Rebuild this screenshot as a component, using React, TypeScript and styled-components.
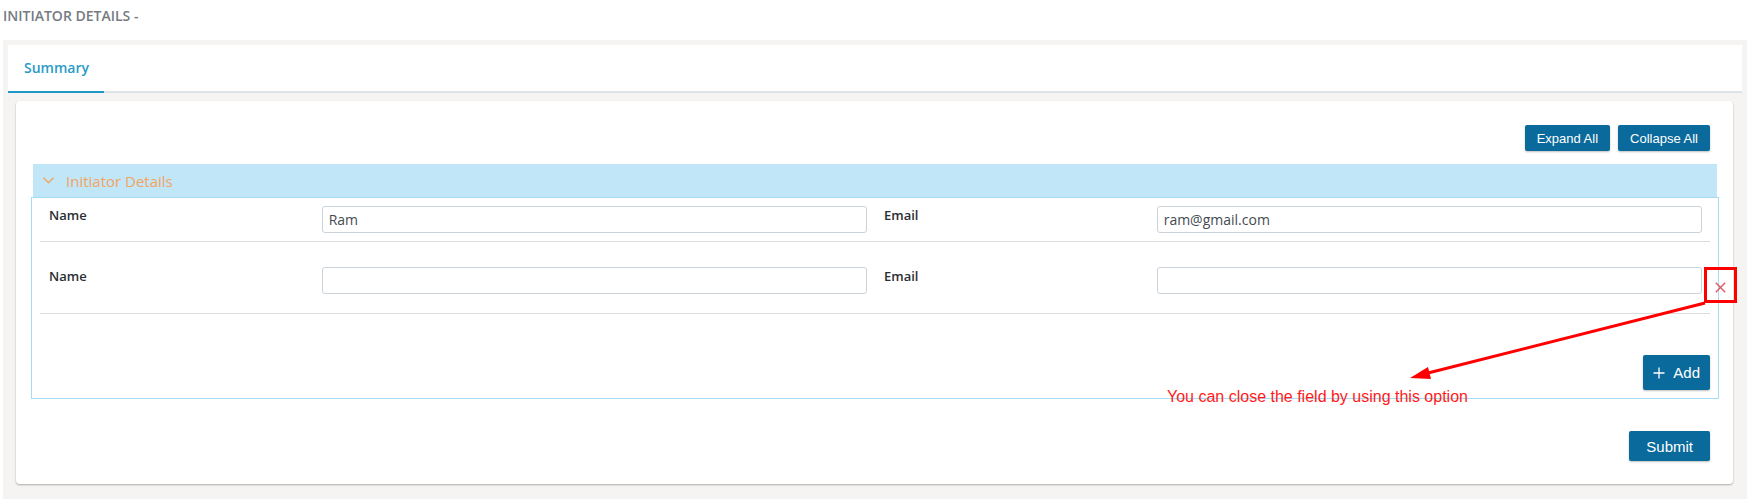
import React from "react";
import styled, { createGlobalStyle } from "styled-components";

const GlobalStyle = createGlobalStyle`
  html, body {
    margin: 0;
    padding: 0;
    background: #ffffff;
    overflow: hidden;
  }
  body {
    font-family: "Open Sans", "Noto Sans", sans-serif;
  }
  * {
    box-sizing: border-box;
  }
`;

const SPage = styled.div`
  position: relative;
  width: 1755px;
  height: 499px;
`;

const STitle = styled.div`
  padding: 6px 0 0 3px;
  margin-bottom: 14px;
  line-height: 20px;
  font-size: 14px;
  font-weight: 600;
  color: #767b82;
`;

const SPanel = styled.div`
  margin: 0 8px 0 3px;
  padding: 5px 5px 15px;
  background: #f5f4f2;
`;

const STabBar = styled.div`
  display: flex;
  background: #ffffff;
  border-bottom: 2px solid #dfe2e6;
`;

const STab = styled.div<{ $active?: boolean }>`
  padding: 13px 15px 14px 16px;
  margin-bottom: -2px;
  line-height: 19px;
  font-size: 14px;
  font-weight: 600;
  color: ${(p) => (p.$active ? "#2a9bc8" : "#555")};
  border-bottom: 2px solid ${(p) => (p.$active ? "#1f98c5" : "transparent")};
`;

const SCard = styled.div`
  margin: 8px 9px 0 8px;
  padding: 24px 15px 23px 16px;
  background: #ffffff;
  border-radius: 4px;
  box-shadow: 0 1px 2px rgba(0, 0, 0, 0.3);
`;

const SToolbar = styled.div<{ $gap?: number }>`
  display: flex;
  justify-content: flex-end;
  gap: ${(p) => p.$gap ?? 8}px;
  padding-right: 8px;
`;

const SButton = styled.button<{ $h: number; $size: number; $px: number }>`
  display: inline-flex;
  align-items: center;
  gap: 8px;
  height: ${(p) => p.$h}px;
  padding: 0 ${(p) => p.$px}px;
  border: none;
  border-radius: 2px;
  background: #0a6a9b;
  color: #ffffff;
  font-family: "Liberation Sans", Arial, sans-serif;
  font-size: ${(p) => p.$size}px;
  box-shadow: 0 1px 2px rgba(0, 0, 0, 0.25);
  cursor: pointer;
`;

const SAccordion = styled.div`
  margin-top: 13px;
`;

const SAccHeader = styled.div`
  display: flex;
  align-items: center;
  gap: 12px;
  height: 33px;
  margin: 0 1px;
  padding-left: 10px;
  background: #c1e6f7;
  color: #f4a460;
  font-size: 15px;
`;

const SAccBody = styled.div`
  border: 1px solid #a6dcf3;
  margin: 0 -1px;
  padding: 0 8px 8px;
`;

const SRow = styled.div<{ $pt: number; $pb: number }>`
  position: relative;
  display: grid;
  grid-template-columns: 1fr 1fr;
  column-gap: 17px;
  padding: ${(p) => p.$pt}px 8px ${(p) => p.$pb}px 9px;
  border-bottom: 1px solid #dcdcdc;
`;

const SField = styled.div`
  display: grid;
  grid-template-columns: 1fr 2fr;
  align-items: start;
`;

const SLabel = styled.label`
  line-height: 18px;
  font-size: 13px;
  font-weight: 600;
  color: #2a2e33;
`;

const SInput = styled.input`
  height: 27px;
  width: 100%;
  padding: 0 6px;
  border: 1px solid #ccd2d9;
  border-radius: 3px;
  font-family: "Open Sans", "Noto Sans", sans-serif;
  font-size: 14px;
  color: #454b52;
  outline: none;
`;

const SClose = styled.button`
  position: absolute;
  right: -16px;
  top: 40px;
  width: 11px;
  height: 11px;
  padding: 0;
  border: none;
  background: transparent;
  display: flex;
  cursor: pointer;
`;

const SAddRow = styled.div`
  display: flex;
  justify-content: flex-end;
  margin-top: 41px;
`;

const SSubmitRow = styled(SToolbar)`
  margin-top: 32px;
`;

/* annotation drawn over the screenshot */
const SMarkBox = styled.div`
  position: absolute;
  left: 1704px;
  top: 267px;
  width: 33px;
  height: 36px;
  border: 3px solid #ff0000;
  pointer-events: none;
`;

const SArrow = styled.svg`
  position: absolute;
  left: 1400px;
  top: 295px;
  pointer-events: none;
`;

const SNote = styled.span`
  position: absolute;
  left: 1167px;
  top: 388px;
  font-family: "Liberation Sans", Arial, sans-serif;
  font-size: 16px;
  color: #ff1a1a;
  white-space: nowrap;
  pointer-events: none;
`;

const Chevron = () => (
  <svg width="11" height="7" viewBox="0 0 11 7">
    <polyline points="0.5,0.8 5.5,5.8 10.5,0.8" fill="none" stroke="#f4a460" strokeWidth="1.4" />
  </svg>
);

const Plus = () => (
  <svg width="12" height="12" viewBox="0 0 12 12">
    <path d="M6 0.5v11M0.5 6h11" stroke="#ffffff" strokeWidth="1.3" />
  </svg>
);

const Cross = () => (
  <svg width="11" height="11" viewBox="0 0 11 11">
    <path d="M0.8 0.8l9.4 9.4M10.2 0.8l-9.4 9.4" stroke="#de5762" strokeWidth="1.4" />
  </svg>
);

interface InitiatorRowProps {
  name: string;
  email: string;
  pt: number;
  pb: number;
  removable?: boolean;
}

const InitiatorRow = ({ name, email, pt, pb, removable }: InitiatorRowProps) => (
  <SRow $pt={pt} $pb={pb}>
    <SField>
      <SLabel>Name</SLabel>
      <SInput defaultValue={name} />
    </SField>
    <SField>
      <SLabel>Email</SLabel>
      <SInput defaultValue={email} />
    </SField>
    {removable && (
      <SClose aria-label="Remove">
        <Cross />
      </SClose>
    )}
  </SRow>
);

export default function App() {
  return (
    <SPage>
      <GlobalStyle />
      <STitle>INITIATOR DETAILS -</STitle>
      <SPanel>
        <STabBar>
          <STab $active>Summary</STab>
        </STabBar>
        <SCard>
          <SToolbar>
            <SButton $h={26} $size={13} $px={12}>Expand All</SButton>
            <SButton $h={26} $size={13} $px={12}>Collapse All</SButton>
          </SToolbar>
          <SAccordion>
            <SAccHeader>
              <Chevron />
              Initiator Details
            </SAccHeader>
            <SAccBody>
              <InitiatorRow name="Ram" email="ram@gmail.com" pt={8} pb={8} />
              <InitiatorRow name="" email="" pt={25} pb={19} removable />
              <SAddRow>
                <SButton $h={35} $size={15} $px={10}>
                  <Plus />
                  Add
                </SButton>
              </SAddRow>
            </SAccBody>
          </SAccordion>
          <SSubmitRow>
            <SButton $h={30} $size={15} $px={17}>Submit</SButton>
          </SSubmitRow>
        </SCard>
      </SPanel>

      <SMarkBox />
      <SArrow width="320" height="95" viewBox="0 0 320 95">
        <line x1="305" y1="8" x2="28" y2="78" stroke="#ff0000" strokeWidth="3" />
        <polygon points="10,83 31,84 28,72" fill="#ff0000" />
      </SArrow>
      <SNote>You can close the field by using this option</SNote>
    </SPage>
  );
}
